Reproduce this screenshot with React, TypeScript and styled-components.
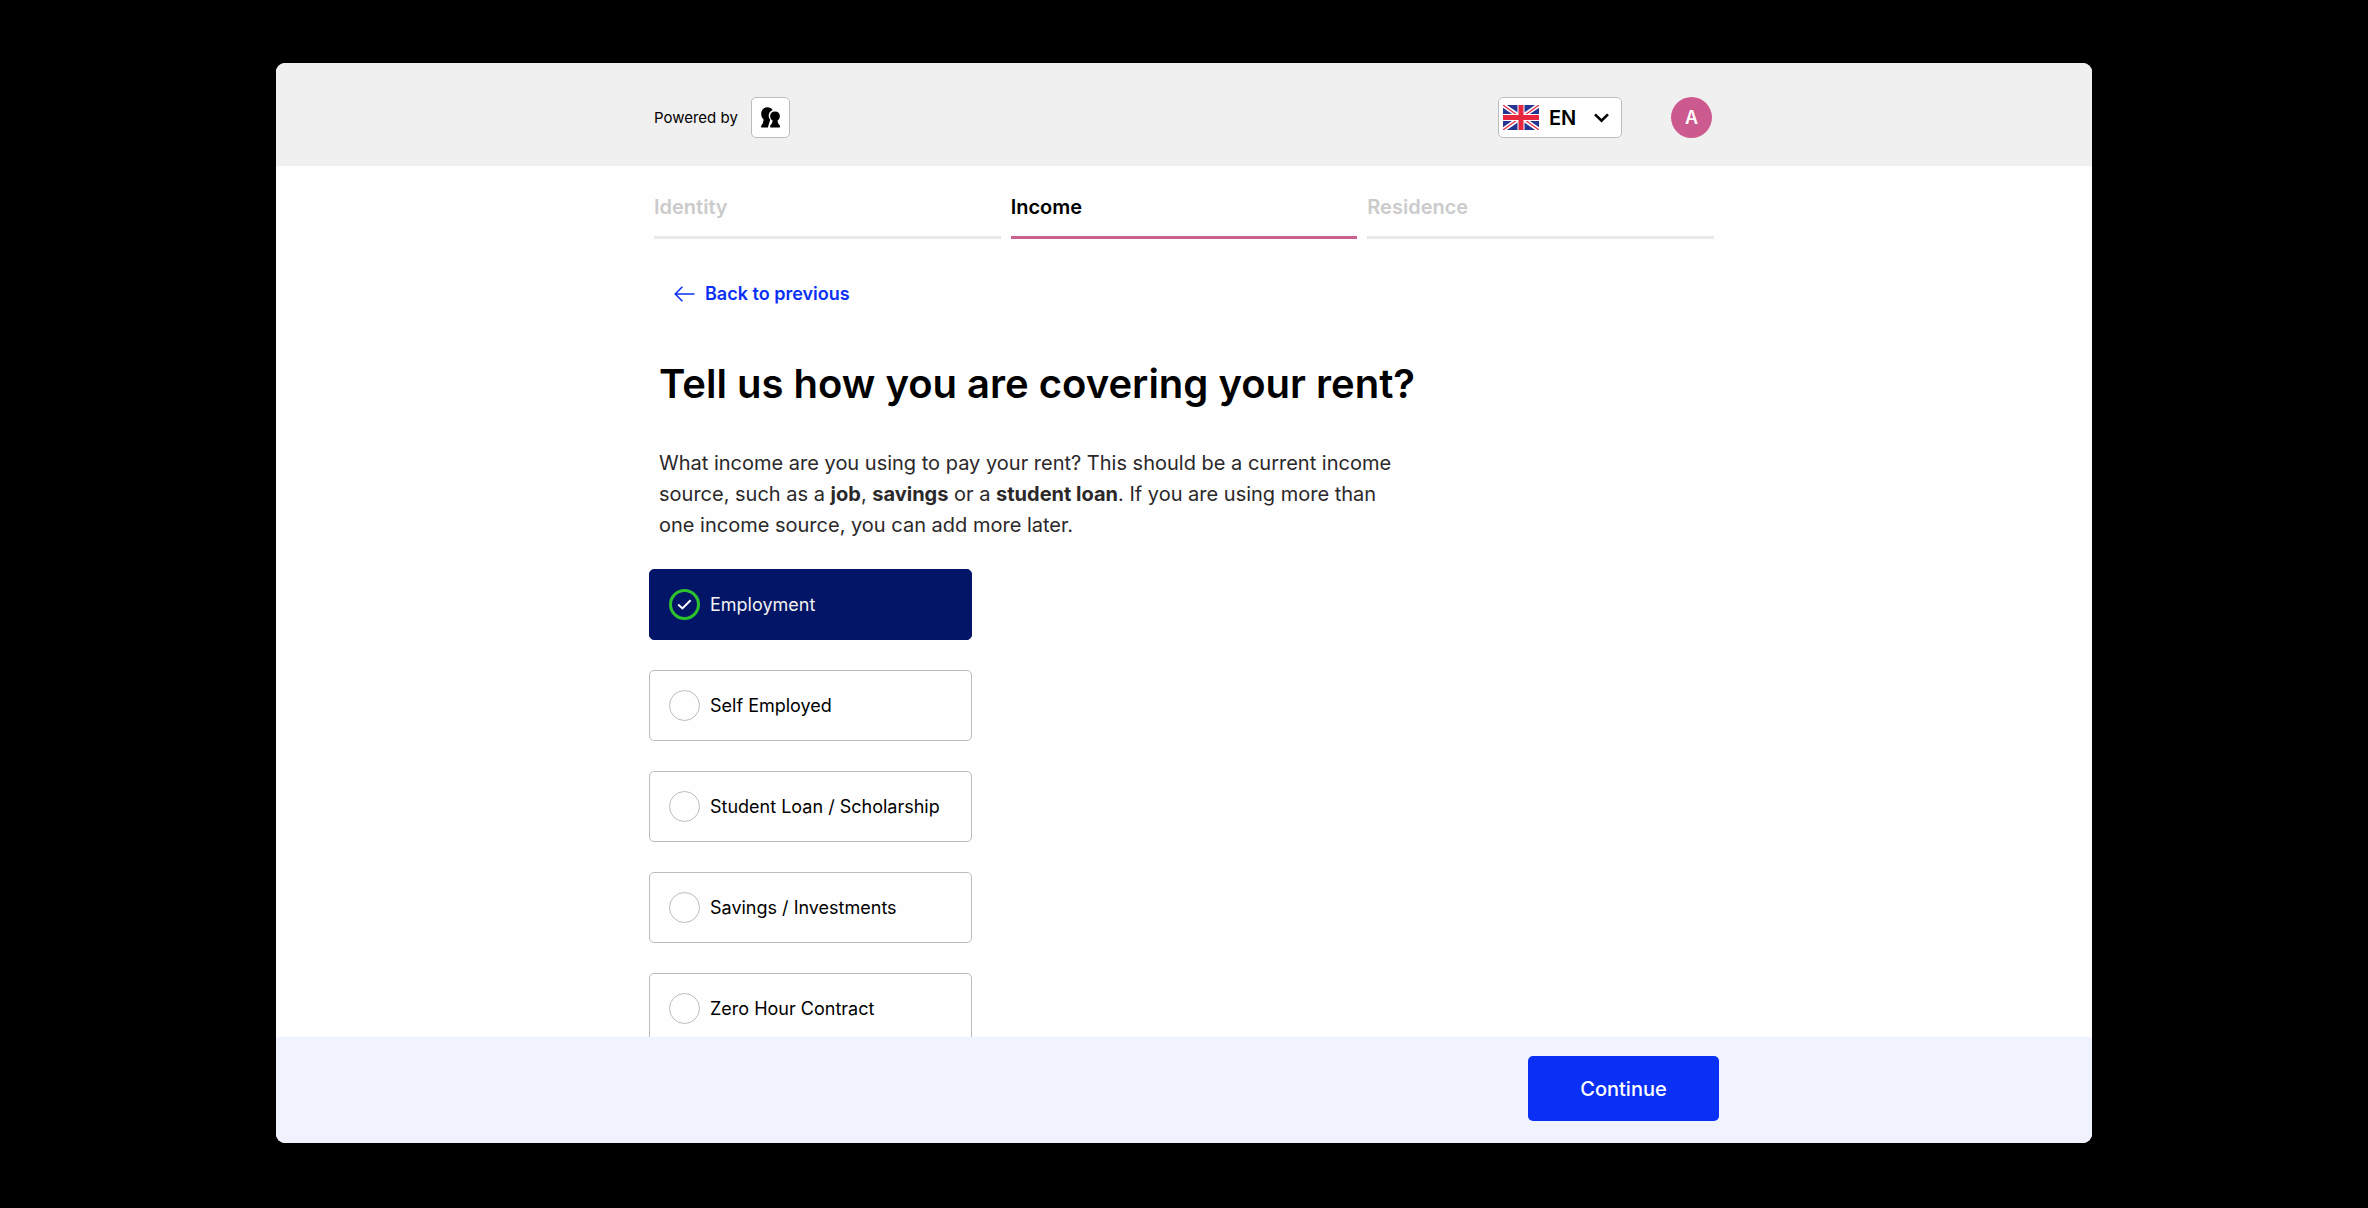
import React, { useState } from "react";
import styled, { createGlobalStyle } from "styled-components";

const GlobalStyle = createGlobalStyle`
  *, *::before, *::after { box-sizing: border-box; }
  body {
    margin: 0;
    background: #000;
    color: #000;
    font-family: Inter, "Liberation Sans", sans-serif;
  }
  button, select, input { font: inherit; }
`;

const Page = styled.div`
  display: flex;
  height: 100vh;
  padding: 63px 276px 65px;
`;

const Window = styled.div`
  flex: 1;
  display: flex;
  flex-direction: column;
  min-width: 0;
  overflow: hidden;
  background: #fefefe;
  border-radius: 9px;
`;

const Header = styled.header`
  flex: none;
  background: #f0f0f0;
  padding: 34px 0 28px;
`;

const Container = styled.div`
  display: flex;
  flex-direction: column;
  width: 100%;
  max-width: 1060px;
  margin: 0 auto;
`;

const HeaderRow = styled(Container)`
  flex-direction: row;
  align-items: center;
  justify-content: space-between;
  padding-right: 2px;
`;

const Powered = styled.div`
  display: flex;
  align-items: center;
  gap: 13px;
  font-size: 15px;
  line-height: 20px;
`;

const LogoBox = styled.span`
  display: flex;
  align-items: center;
  justify-content: center;
  width: 39px;
  height: 41px;
  background: #fff;
  border: 1px solid #bcbcbc;
  border-radius: 5px;
`;

const HeaderActions = styled.div`
  display: flex;
  align-items: center;
  gap: 49px;
`;

const Language = styled.div`
  position: relative;
  display: flex;
  width: 124px;
  height: 41px;
`;

const LanguageSelect = styled.select`
  appearance: none;
  width: 100%;
  padding: 0 36px 0 50px;
  background: #fff;
  border: 1px solid #bcbcbc;
  border-radius: 5px;
  color: #000;
  font-size: 20px;
  font-weight: 600;
  line-height: 24px;
  cursor: pointer;
`;

const LanguageIcons = styled.span`
  position: absolute;
  inset: 0;
  display: flex;
  align-items: center;
  justify-content: space-between;
  padding: 0 13px 0 5px;
  pointer-events: none;
`;

const Avatar = styled.button`
  width: 41px;
  height: 41px;
  padding: 0;
  border: 0;
  border-radius: 50%;
  background: #cd5a8f;
  color: #fff;
  font-size: 18px;
  font-weight: 600;
  cursor: pointer;
`;

const Body = styled.main`
  flex: 1;
  min-height: 0;
  overflow: hidden;
`;

const Tabs = styled.nav`
  display: grid;
  grid-template-columns: repeat(3, 1fr);
  gap: 10px;
  padding-top: 29px;
`;

const Tab = styled.a<{ $active: boolean }>`
  padding-bottom: 17px;
  border-bottom: 3px solid ${(p) => (p.$active ? "#c9608f" : "#e8e8e8")};
  color: ${(p) => (p.$active ? "#000" : "#cbcbcb")};
  font-size: 20px;
  font-weight: 600;
  line-height: 24px;
  text-decoration: none;
`;

const BackButton = styled.button`
  display: flex;
  align-items: center;
  align-self: flex-start;
  gap: 10px;
  margin: 43px 0 0 20px;
  padding: 0;
  border: 0;
  background: none;
  color: #0a2ff5;
  font-size: 18px;
  font-weight: 600;
  line-height: 24px;
  cursor: pointer;
`;

const Title = styled.h1`
  margin: 54px 0 0 5px;
  font-size: 40px;
  font-weight: 600;
  line-height: 48px;
`;

const Intro = styled.p`
  max-width: 745px;
  margin: 40px 0 0 5px;
  color: #2b2829;
  font-size: 20px;
  line-height: 31px;

  strong { font-weight: 700; }
`;

const Options = styled.fieldset`
  display: flex;
  flex-direction: column;
  gap: 30px;
  width: 323px;
  margin: 28px 0 0 -5px;
  padding: 0;
  border: 0;
`;

const Option = styled.label<{ $checked: boolean }>`
  display: flex;
  align-items: center;
  gap: 10px;
  height: 71px;
  padding: 0 19px;
  border: 1px solid ${(p) => (p.$checked ? "#031566" : "#bcbcbc")};
  border-radius: 5px;
  background: ${(p) => (p.$checked ? "#031566" : "transparent")};
  color: ${(p) => (p.$checked ? "#f2f2f2" : "#000")};
  font-size: 18px;
  line-height: 24px;
  cursor: pointer;
`;

const Mark = styled.span`
  display: grid;
  place-items: center;

  > * { grid-area: 1 / 1; }
  svg { pointer-events: none; }
`;

const Radio = styled.input`
  appearance: none;
  width: 31px;
  height: 31px;
  margin: 0;
  border: 1px solid #bcbcbc;
  border-radius: 50%;
  cursor: pointer;

  &:checked { border: 3px solid #2dc22d; }
`;

const Footer = styled.footer`
  flex: none;
  padding: 19px 0 22px;
  background: #f0f2fe;
`;

const Continue = styled.button`
  align-self: flex-end;
  width: 191px;
  height: 65px;
  margin-right: -5px;
  border: 0;
  border-radius: 5px;
  background: #0a2ff5;
  color: #fff;
  font-size: 20px;
  font-weight: 500;
  cursor: pointer;
`;

const Logo = () => (
  <svg width="19" height="21" viewBox="0 0 19 21" aria-hidden="true">
    <path d="M6.5 0.2C8.8 0.2 10.6 1.2 11.6 3C9.2 3.9 7.7 6 7.7 8.6C7.7 10.4 8.3 11.8 9.2 12.8C8.9 14 8.7 14.4 8.3 15.5L6.9 20.6H0.2V18.6C1.6 17.6 2.4 15.5 2.6 12.3C1 11.2 0.2 9.2 0.2 6.8C0.2 3 2.8 0.2 6.5 0.2Z" />
    <path d="M14 4.4C17 4.4 18.9 6.4 18.9 9C18.9 11 17.9 12.6 16.5 13.4C16.8 15.7 17.5 17.3 18.9 18.5V20.6H9.2V18.5C10.6 17.3 11.4 15.6 11.6 13.4C10.1 12.6 9.1 11 9.1 9C9.1 6.4 11 4.4 14 4.4Z" />
  </svg>
);

const Flag = () => (
  <svg width="36" height="25" viewBox="0 0 36 25" aria-hidden="true">
    <rect width="36" height="25" fill="#243592" />
    <path d="M0 0L36 25M36 0L0 25" stroke="#fff" strokeWidth="4.4" />
    <path d="M0 0L14 10M36 0L22 10M0 25L14 15M36 25L22 15" stroke="#e8273f" strokeWidth="1.2" />
    <path d="M18 0V25M0 12.5H36" stroke="#fff" strokeWidth="7" />
    <path d="M18 0V25M0 12.5H36" stroke="#e8273f" strokeWidth="5" />
  </svg>
);

const Chevron = () => (
  <svg width="15" height="10" viewBox="0 0 15 10" fill="none" stroke="#000" strokeWidth="2.6" aria-hidden="true">
    <path d="M1 1.4L7.5 7.8L14 1.4" />
  </svg>
);

const Arrow = () => (
  <svg width="21" height="16" viewBox="0 0 21 16" fill="none" stroke="#0a2ff5" strokeWidth="1.5" aria-hidden="true">
    <path d="M20.5 8H1.2M8.4 0.8L1.2 8L8.4 15.2" />
  </svg>
);

const Check = () => (
  <svg width="15" height="11" viewBox="0 0 15 11" fill="none" stroke="#fff" strokeWidth="2" aria-hidden="true">
    <path d="M1.2 5.6L5.4 9.4L13.6 1.2" />
  </svg>
);

const steps = ["Identity", "Income", "Residence"];
const sources = [
  "Employment",
  "Self Employed",
  "Student Loan / Scholarship",
  "Savings / Investments",
  "Zero Hour Contract",
];

export default function App() {
  const [source, setSource] = useState("Employment");

  return (
    <>
      <GlobalStyle />
      <Page>
        <Window>
          <Header>
            <HeaderRow>
              <Powered>
                Powered by
                <LogoBox>
                  <Logo />
                </LogoBox>
              </Powered>
              <HeaderActions>
                <Language>
                  <LanguageSelect aria-label="Language" defaultValue="EN">
                    <option>EN</option>
                  </LanguageSelect>
                  <LanguageIcons>
                    <Flag />
                    <Chevron />
                  </LanguageIcons>
                </Language>
                <Avatar type="button" aria-label="Account A">A</Avatar>
              </HeaderActions>
            </HeaderRow>
          </Header>

          <Body>
            <Container>
              <Tabs aria-label="Progress">
                {steps.map((step) => (
                  <Tab
                    key={step}
                    href={`#${step.toLowerCase()}`}
                    $active={step === "Income"}
                    aria-current={step === "Income" ? "step" : undefined}
                  >
                    {step}
                  </Tab>
                ))}
              </Tabs>
              <BackButton type="button">
                <Arrow />
                Back to previous
              </BackButton>
              <Title>Tell us how you are covering your rent?</Title>
              <Intro>
                What income are you using to pay your rent? This should be a current income source, such as
                a <strong>job</strong>, <strong>savings</strong> or a <strong>student loan</strong>. If you
                are using more than one income source, you can add more later.
              </Intro>
              <Options aria-label="Income source">
                {sources.map((name) => (
                  <Option key={name} $checked={source === name}>
                    <Mark>
                      <Radio
                        type="radio"
                        name="source"
                        value={name}
                        checked={source === name}
                        onChange={() => setSource(name)}
                      />
                      {source === name && <Check />}
                    </Mark>
                    {name}
                  </Option>
                ))}
              </Options>
            </Container>
          </Body>

          <Footer>
            <Container>
              <Continue type="button">Continue</Continue>
            </Container>
          </Footer>
        </Window>
      </Page>
    </>
  );
}
